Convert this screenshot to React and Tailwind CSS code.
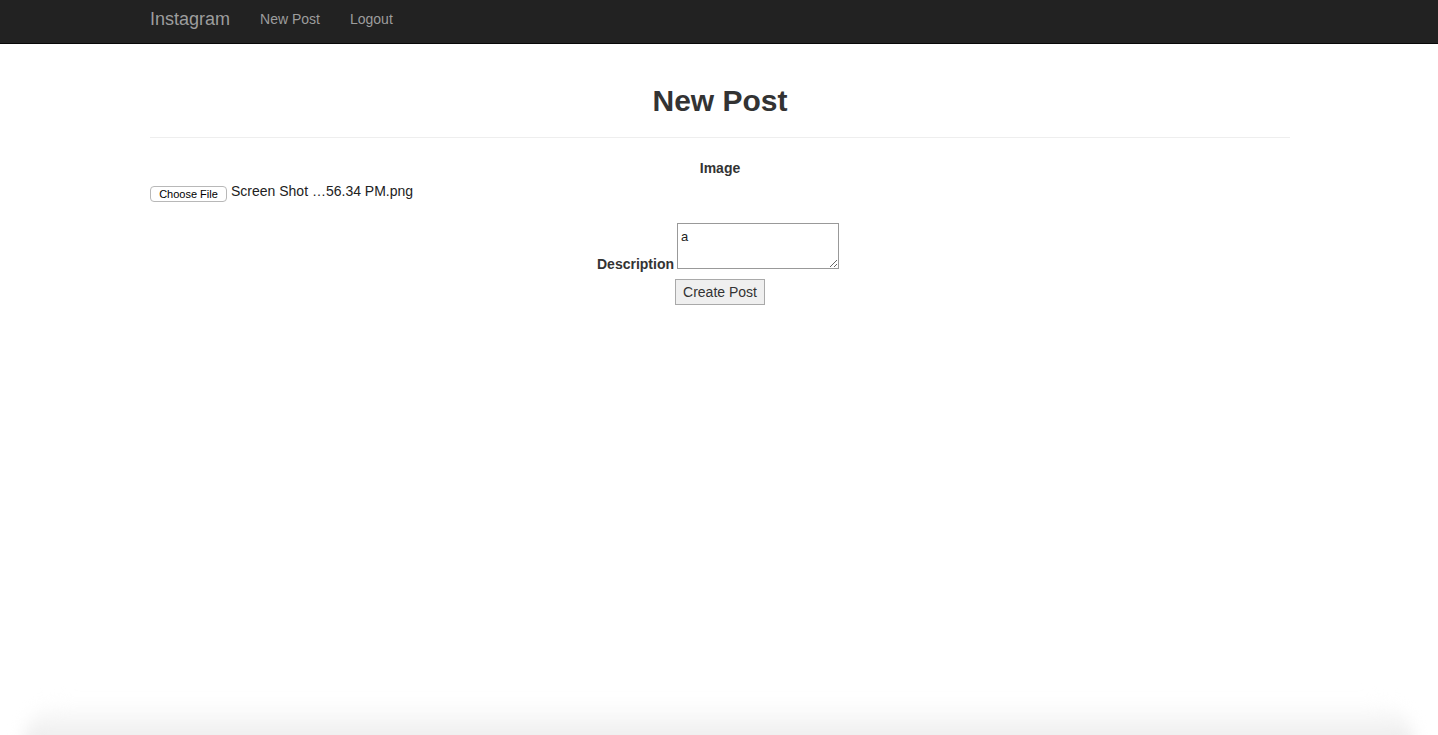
import React from "react";

const NavBar = () => {
  return (
    <nav className="h-[44px] bg-[#222222] border-b border-[#080808]">
      <div className="w-[1140px] ml-[150px] flex items-center h-[38px]">
        <span className="text-[18px] text-[#9d9d9d] leading-[20px]">Instagram</span>
        <span className="ml-[30px] text-[14px] text-[#9d9d9d] leading-[20px]">New Post</span>
        <span className="ml-[30px] text-[14px] text-[#9d9d9d] leading-[20px]">Logout</span>
      </div>
    </nav>
  );
};

const NewPostForm = () => {
  return (
    <div className="w-[1140px] ml-[150px] text-[#333333] text-[14px]">
      <div className="mt-[40px] pb-[20px] border-b border-[#eeeeee]">
        <h1 className="text-[30px] font-bold leading-[33px] text-center">New Post</h1>
      </div>
      <div className="mt-[20px] text-center font-bold leading-[20px]">Image</div>
      <div className="mt-[3px] flex items-start">
        <span className="mt-[5px] h-[16px] w-[77px] flex items-center justify-center bg-white border border-[#b8b8b8] rounded-[4px] text-[11px] text-black leading-none">
          Choose File
        </span>
        <span className="ml-[4px] leading-[20px] text-[#222]">Screen Shot …56.34 PM.png</span>
      </div>
      <div className="mt-[21px] pr-[4px] flex justify-center items-end">
        <label className="font-bold leading-[16px] mb-[-3px] mr-[3px]">Description</label>
        <textarea
          defaultValue="a"
          className="w-[162px] h-[46px] border border-[#999999] px-[3px] pt-[5px] pb-[2px] text-[13px] leading-[16px] text-[#222] outline-none"
        />
      </div>
      <div className="mt-[10px] flex justify-center">
        <button className="w-[90px] h-[26px] bg-[#efefef] border border-[#a9a9a9] text-[14px] text-[#333] leading-none">
          Create Post
        </button>
      </div>
    </div>
  );
};

export default function App() {
  return (
    <div className="h-screen flex flex-col bg-white overflow-hidden" style={{ fontFamily: '"Liberation Sans", Arial, sans-serif' }}>
      <NavBar />
      <div className="flex-1">
        <NewPostForm />
      </div>
      <div className="h-[34px] px-[24px]">
        <div className="h-[50px] rounded-t-[40px] bg-gradient-to-b from-white to-[#e8e8e8] blur-[8px]" />
      </div>
    </div>
  );
}
